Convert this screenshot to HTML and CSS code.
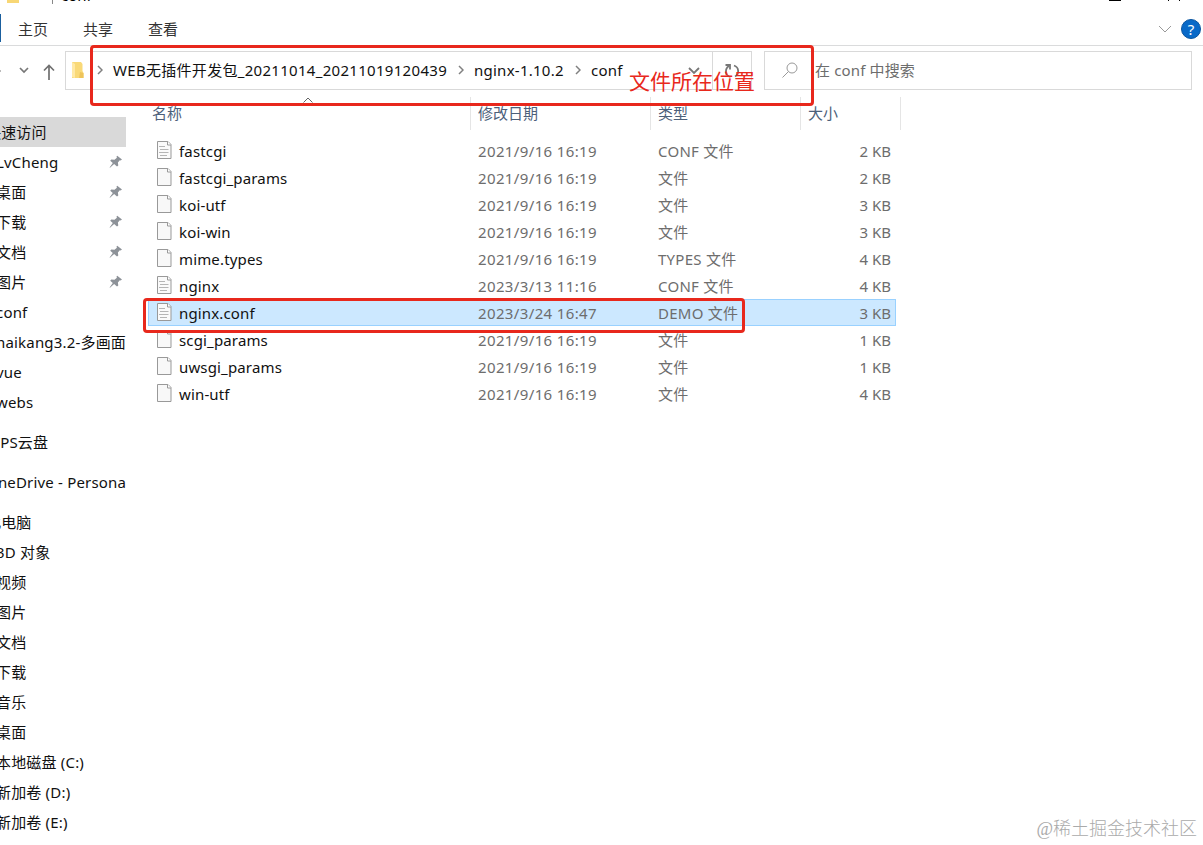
FILE: index.html
```html
<!DOCTYPE html>
<html lang="zh-CN">
<head>
    <meta charset="UTF-8">
    <meta name="viewport" content="width=device-width, initial-scale=1.0">
    <title>conf</title>
    <link rel="stylesheet" href="styles.css">
</head>
<body>
    <!-- Shared icons -->
    <svg class="symbols">
        <symbol id="file" viewBox="0 0 16 20">
            <path d="M1.500 1.500H12L15 4.500V18.500H1.500Z" fill="#f8f8f8" stroke="#999"/>
            <path d="M11.500 1.500V5H15" fill="#fff" stroke="#999"/>
        </symbol>
        <symbol id="text-file" viewBox="0 0 16 20">
            <path d="M1.500 1.500H12L15 4.500V18.500H1.500Z" fill="#fafafa" stroke="#999"/>
            <path d="M11.500 1.500V5H15" fill="#fff" stroke="#999"/>
            <path d="M3 6.500H9M4 9.500H12.500M3 12.500H12.500M4 15.500H11" stroke="#b5b5b5"/>
        </symbol>
        <symbol id="pin" viewBox="0 0 14 14">
            <path d="M8.200 0.800L13 4.500L11.600 5.500L10.800 5.300L8.900 7.600L9.300 10.400L8 11.500L5.100 9.100L1 12.800L0.600 12.500L3.800 8.100L1.200 5.700L2.300 4.600L5.500 4.700L7.900 2.700L7.500 1.500Z" fill="#8d9298"/>
        </symbol>
        <symbol id="chevron" viewBox="0 0 6 10">
            <path d="M1 1L5 5L1 9" fill="none" stroke="#808080" stroke-width="1.500"/>
        </symbol>
    </svg>

    <div class="title-bar">
        <span class="title-folder"></span>
        <span class="title-sep"></span>
        <span class="title-text">conf</span>
        <span class="win-min"></span>
        <span class="win-max"></span>
    </div>

    <div class="tabs">
        <span class="file-tab"></span>
        <span class="tab">主页</span>
        <span class="tab">共享</span>
        <span class="tab">查看</span>
        <svg class="ribbon-arrow" width="14" height="8" viewBox="0 0 14 8"><path d="M1 1L7 7L13 1" fill="none" stroke="#999"/></svg>
        <span class="help">?</span>
    </div>

    <div class="nav-row">
        <div class="nav-buttons">
            <span class="forward-tip"></span>
            <svg width="10" height="7" viewBox="0 0 10 7"><path d="M1 1L5 5L9 1" fill="none" stroke="#777" stroke-width="1.700"/></svg>
            <svg class="up" width="12" height="16" viewBox="0 0 12 16"><path d="M6 16V1.500M1 6.500L6 1.500L11 6.500" fill="none" stroke="#707070" stroke-width="1.700"/></svg>
        </div>
        <div class="address">
            <svg class="folder" width="13" height="18" viewBox="0 0 13 18"><path d="M1 1H10L11.500 3V10L12.500 12V17H1Z" fill="#f9d978"/><path d="M1 1L4 3V17L1 16Z" fill="#ffe9a6"/><path d="M9 11L12.500 12V17H8Z" fill="#eec45b"/></svg>
            <svg class="crumb-sep" width="6" height="10"><use href="#chevron"/></svg>
            <span class="crumb crumb-long">WEB无插件开发包_20211014_20211019120439</span>
            <svg class="crumb-sep" width="6" height="10"><use href="#chevron"/></svg>
            <span class="crumb crumb-version">nginx-1.10.2</span>
            <svg class="crumb-sep" width="6" height="10"><use href="#chevron"/></svg>
            <span class="crumb">conf</span>
            <svg class="history" width="12" height="8" viewBox="0 0 12 8"><path d="M1 1L6 6L11 1" fill="none" stroke="#777" stroke-width="1.800"/></svg>
            <span class="refresh">
                <svg width="16" height="16" viewBox="0 0 16 16"><path d="M6.500 14A6 6 0 0 1 5 3M10 2.500A6 6 0 0 1 11 13.500" fill="none" stroke="#777" stroke-width="1.800"/><path d="M1.500 2H6V6.500" fill="none" stroke="#777" stroke-width="1.800"/></svg>
            </span>
        </div>
        <div class="search">
            <svg width="16" height="16" viewBox="0 0 16 16"><circle cx="10" cy="6" r="5" fill="none" stroke="#999"/><path d="M6.500 9.500L0.500 15.500" stroke="#999"/></svg>
            <span>在 conf 中搜索</span>
        </div>
    </div>

    <div class="content">
        <div class="sidebar">
            <div class="side-item root active"><span>快速访问</span></div>
            <div class="side-item pinned"><span>LvCheng</span><svg width="14" height="14"><use href="#pin"/></svg></div>
            <div class="side-item pinned"><span>桌面</span><svg width="14" height="14"><use href="#pin"/></svg></div>
            <div class="side-item pinned"><span>下载</span><svg width="14" height="14"><use href="#pin"/></svg></div>
            <div class="side-item pinned"><span>文档</span><svg width="14" height="14"><use href="#pin"/></svg></div>
            <div class="side-item pinned"><span>图片</span><svg width="14" height="14"><use href="#pin"/></svg></div>
            <div class="side-item"><span>conf</span></div>
            <div class="side-item"><span>haikang3.2-多画面</span></div>
            <div class="side-item"><span>vue</span></div>
            <div class="side-item"><span>webs</span></div>
            <div class="side-item root group"><span>WPS云盘</span></div>
            <div class="side-item root group"><span>OneDrive - Persona</span></div>
            <div class="side-item root group"><span>此电脑</span></div>
            <div class="side-item"><span>3D 对象</span></div>
            <div class="side-item"><span>视频</span></div>
            <div class="side-item"><span>图片</span></div>
            <div class="side-item"><span>文档</span></div>
            <div class="side-item"><span>下载</span></div>
            <div class="side-item"><span>音乐</span></div>
            <div class="side-item"><span>桌面</span></div>
            <div class="side-item"><span>本地磁盘 (C:)</span></div>
            <div class="side-item"><span>新加卷 (D:)</span></div>
            <div class="side-item"><span>新加卷 (E:)</span></div>
        </div>

        <div class="files">
            <div class="file-head">
                <span class="col-name">名称</span>
                <span>修改日期</span>
                <span>类型</span>
                <span>大小</span>
                <svg class="sort" width="10" height="6" viewBox="0 0 10 6"><path d="M0.500 5.500L5 1L9.500 5.500" fill="none" stroke="#666"/></svg>
            </div>
            <div class="file-list">
                <div class="file-row"><svg width="16" height="20"><use href="#text-file"/></svg><span class="name">fastcgi</span><span class="date">2021/9/16 16:19</span><span class="type">CONF 文件</span><span class="size">2 KB</span></div>
                <div class="file-row"><svg width="16" height="20"><use href="#file"/></svg><span class="name">fastcgi_params</span><span class="date">2021/9/16 16:19</span><span class="type">文件</span><span class="size">2 KB</span></div>
                <div class="file-row"><svg width="16" height="20"><use href="#file"/></svg><span class="name">koi-utf</span><span class="date">2021/9/16 16:19</span><span class="type">文件</span><span class="size">3 KB</span></div>
                <div class="file-row"><svg width="16" height="20"><use href="#file"/></svg><span class="name">koi-win</span><span class="date">2021/9/16 16:19</span><span class="type">文件</span><span class="size">3 KB</span></div>
                <div class="file-row"><svg width="16" height="20"><use href="#file"/></svg><span class="name">mime.types</span><span class="date">2021/9/16 16:19</span><span class="type">TYPES 文件</span><span class="size">4 KB</span></div>
                <div class="file-row"><svg width="16" height="20"><use href="#text-file"/></svg><span class="name">nginx</span><span class="date">2023/3/13 11:16</span><span class="type">CONF 文件</span><span class="size">4 KB</span></div>
                <div class="file-row selected"><svg width="16" height="20"><use href="#text-file"/></svg><span class="name">nginx.conf</span><span class="date">2023/3/24 16:47</span><span class="type">DEMO 文件</span><span class="size">3 KB</span></div>
                <div class="file-row"><svg width="16" height="20"><use href="#file"/></svg><span class="name">scgi_params</span><span class="date">2021/9/16 16:19</span><span class="type">文件</span><span class="size">1 KB</span></div>
                <div class="file-row"><svg width="16" height="20"><use href="#file"/></svg><span class="name">uwsgi_params</span><span class="date">2021/9/16 16:19</span><span class="type">文件</span><span class="size">1 KB</span></div>
                <div class="file-row"><svg width="16" height="20"><use href="#file"/></svg><span class="name">win-utf</span><span class="date">2021/9/16 16:19</span><span class="type">文件</span><span class="size">4 KB</span></div>
            </div>
        </div>
    </div>

    <!-- Red marks over the window -->
    <div class="mark mark-path"></div>
    <div class="mark mark-file"></div>
    <div class="mark-label">文件所在位置</div>
    <div class="watermark">@稀土掘金技术社区</div>
</body>
</html>
```
FILE: styles.css
```css
* {
    box-sizing: border-box;
}
body {
    margin: 0;
    width: 1203px;
    height: 845px;
    position: relative;
    overflow: hidden;
    background: #fff;
    color: #111;
    font-family: "Noto Sans", "Noto Sans CJK SC", sans-serif;
    font-size: 15px;
    line-height: 20px;
}
svg {
    display: block;
    flex: none;
}
span {
    white-space: nowrap;
}
.symbols {
    position: absolute;
    width: 0;
    height: 0;
}

/* Title bar, only its bottom edge is visible */
.title-bar {
    display: flex;
    height: 14px;
    padding-left: 7px;
    overflow: hidden;
}
.title-folder {
    width: 12px;
    height: 3px;
    background: #f8d775;
}
.title-sep {
    width: 1px;
    height: 4px;
    margin-left: 33px;
    background: #888;
}
.title-text {
    margin-left: 8px;
    margin-top: -15px;
    color: #000;
}
.win-min {
    width: 12px;
    height: 1px;
    margin-left: auto;
    background: #000;
}
.win-max {
    width: 12px;
    height: 1px;
    margin: 0 23px 0 47px;
    border: solid #000;
    border-width: 0 1px;
}

/* Ribbon tabs */
.tabs {
    display: flex;
    align-items: center;
    height: 32px;
    padding-right: 2px;
    padding-bottom: 2px;
    border-bottom: 1px solid #dadbdc;
    color: #333;
}
.file-tab {
    width: 1px;
    height: 28px;
    margin: 0 17px 1px 0;
    background: #1a5f9e;
}
.tab {
    margin-right: 35px;
}
.ribbon-arrow {
    margin-left: auto;
}
.help {
    width: 20px;
    height: 20px;
    margin-left: 9px;
    border-radius: 50%;
    border: 1px solid #0a55a0;
    background: #0869c8;
    color: #fff;
    font-size: 15px;
    line-height: 18px;
    text-align: center;
}

/* Address and search */
.nav-row {
    display: flex;
    height: 44px;
    padding-top: 5px;
}
.nav-buttons {
    display: flex;
    align-items: center;
    width: 65px;
    height: 39px;
}
.forward-tip {
    width: 1px;
    height: 2px;
    margin-right: 18px;
    background: #bbb;
}
.up {
    margin: 3px 0 0 14px;
}
.address {
    display: flex;
    align-items: center;
    width: 687px;
    height: 39px;
    padding-bottom: 2px;
    border: 1px solid #d9d9d9;
}
.folder {
    margin-left: 5px;
    margin-right: 13px;
}
.crumb-sep {
    margin-right: 10px;
}
.crumb {
    margin-right: 11px;
    color: #111;
    letter-spacing: 0.2px;
}
.crumb-long {
    width: 334px;
    letter-spacing: 0.3px;
}
.crumb-version {
    width: 90px;
    letter-spacing: 0.25px;
}
.history {
    margin-left: auto;
    margin-right: 12px;
    margin-top: 2px;
}
.refresh {
    display: flex;
    align-items: center;
    justify-content: center;
    width: 39px;
    height: 37px;
    margin-bottom: -2px;
    border-left: 1px solid #d9d9d9;
}
.search {
    display: flex;
    align-items: center;
    gap: 17px;
    width: 428px;
    height: 39px;
    margin-left: 12px;
    padding-left: 17px;
    padding-bottom: 2px;
    border: 1px solid #d9d9d9;
    color: #6d6d6d;
    letter-spacing: 0.15px;
}

.content {
    display: flex;
}

/* Navigation pane */
.sidebar {
    width: 126px;
    padding-top: 27px;
    overflow: hidden;
}
.side-item {
    display: flex;
    align-items: center;
    justify-content: space-between;
    height: 30px;
    padding-right: 3px;
    letter-spacing: 0.18px;
}
.side-item span {
    margin-left: -4px;
}
.side-item.root span {
    margin-left: -14px;
}
.side-item.active {
    background: #d9d9d9;
}
.side-item.group {
    margin-top: 10px;
}

/* File list */
.files {
    width: 775px;
    padding: 7px 0 0 18px;
}
.file-head {
    position: relative;
    display: grid;
    grid-template-columns: 327px 180px 150px 100px;
    height: 33px;
    color: #4c607a;
}
.file-head span {
    padding: 6px 0 0 7px;
    border-right: 1px solid #e5e5e5;
}
.file-head .col-name {
    padding-left: 8px;
}
.sort {
    position: absolute;
    left: 159px;
    top: 0;
}
.file-list {
    margin: 7px 0 0 4px;
}
.file-row {
    display: grid;
    grid-template-columns: 22px 299px 180px 140px 94px;
    align-items: center;
    width: 748px;
    height: 27px;
    padding-left: 8px;
    color: #6d6d6d;
}
.file-row svg {
    margin-top: -2px;
}
.file-row .name {
    padding-left: 1px;
    color: #111;
    letter-spacing: 0.15px;
}
.file-row .date {
    padding-left: 1px;
    letter-spacing: 0.37px;
}
.file-row .type {
    padding-left: 1px;
    letter-spacing: 0.25px;
}
.file-row .size {
    text-align: right;
}
.file-row.selected {
    background: #cce8ff;
    box-shadow: inset 0 0 0 1px #99d1ff;
}

/* Marks */
.mark {
    position: absolute;
    border: 3px solid #e8281c;
    border-radius: 4px;
}
.mark-path {
    left: 90px;
    top: 45px;
    width: 724px;
    height: 61px;
}
.mark-file {
    left: 143px;
    top: 298px;
    width: 602px;
    height: 35px;
}
.mark-label {
    position: absolute;
    left: 629px;
    top: 67px;
    color: #e8281c;
    font-size: 21px;
    line-height: 28px;
}
.watermark {
    position: absolute;
    right: 6px;
    bottom: 4px;
    color: #aaa;
    font-family: "Liberation Serif", "Noto Sans CJK SC", serif;
    font-size: 18px;
    font-weight: 300;
    line-height: 24px;
}
```
